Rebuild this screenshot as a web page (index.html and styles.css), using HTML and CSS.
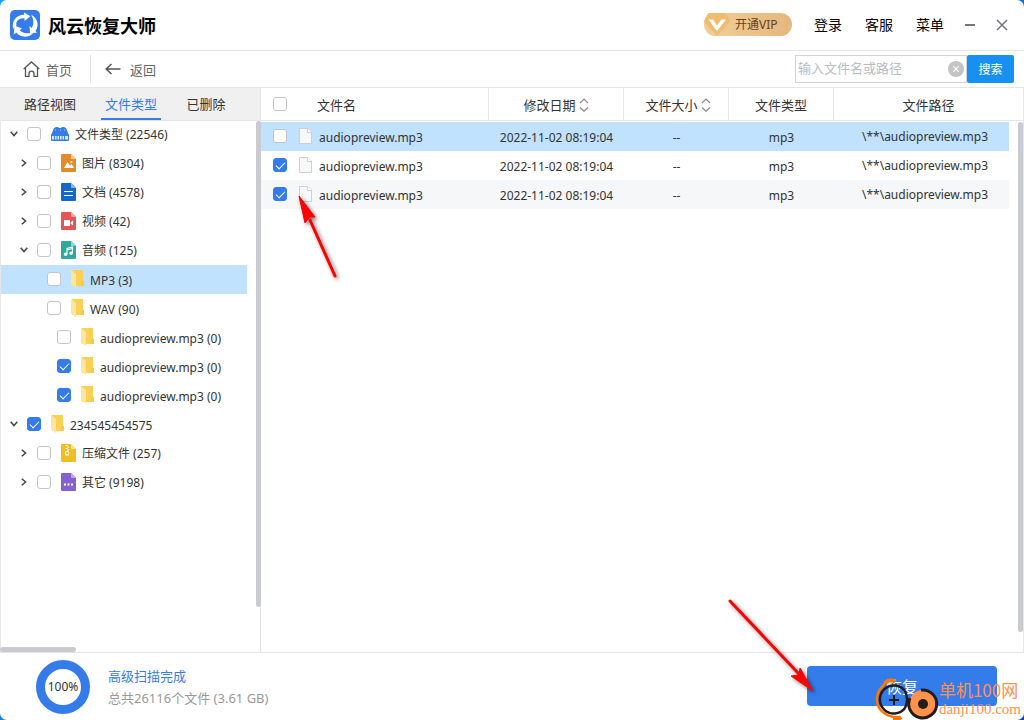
FILE: index.html
```html
<!DOCTYPE html>
<html lang="zh-CN">
<head>
<meta charset="utf-8">
<meta name="viewport" content="width=device-width, initial-scale=1">
<title>风云恢复大师</title>
<link rel="stylesheet" href="styles.css">
</head>
<body>
<svg class="defs" aria-hidden="true">
  <symbol id="folder" viewBox="0 0 13 18"><path d="M1 0H12V11H13V16H1Z" fill="#fad056"/><path d="M10 11H13V16H10Z" fill="#f7c948"/><path d="M0 0L5 4V18L0 14.500Z" fill="#ffe6a0"/></symbol>
  <symbol id="open" viewBox="0 0 8 8"><path d="M.7 1.800L4 5.500L7.300 1.800" fill="none" stroke="#444" stroke-width="1.500"/></symbol>
  <symbol id="closed" viewBox="0 0 8 8"><path d="M1.800.7L5.600 4L1.800 7.300" fill="none" stroke="#444" stroke-width="1.500"/></symbol>
  <symbol id="file" viewBox="0 0 13 16"><path d="M.5.5H9L12.500 4V15.500H.5Z" fill="#f7f8fa" stroke="#cfcfcf"/><path d="M8.500.5V4.500H12.500" fill="#fff" stroke="#cfcfcf"/></symbol>
  <symbol id="sort" viewBox="0 0 10 14"><path d="M1 5L5 1L9 5M1 9.500L5 13.300L9 9.500" fill="none" stroke="#8b8b8b" stroke-width="1.200"/></symbol>
</svg>
<div class="window">
  <header class="titlebar">
    <svg class="logo" viewBox="0 0 30 30" aria-hidden="true"><rect width="30" height="30" rx="5" fill="#357ceb"/><g fill="#fff"><path d="M3.200 19C1.500 11 6 5 14 4.800V2.500L20.500 6.300L14.500 11V8.200C9 7.800 5.500 11 6.500 15Z"/><path d="M21 4.500C27.500 8 29.500 15 25.500 21L27 22.800L20 23L19.500 16L21.800 18C24.300 13.500 23.800 9 21 4.500Z"/><path d="M4.500 15.500L12 18.500L9.800 20.200C13 23.600 18.500 24.200 24 22.200C19 28.500 10 27.800 6.300 22.600L3.800 24.500Z"/></g></svg>
    <h1 class="app-name">风云恢复大师</h1>
    <button class="vip"><svg class="vip-gem" viewBox="0 0 26 23" aria-hidden="true"><path d="M6 0H20Q22 0 23 2L26 7Q26.500 8.500 25 10L14 22Q13 23 12 22L1 10Q-.5 8.500 .5 7L3 2Q4 0 6 0Z" fill="#efbd70"/><path d="M4.500 6.500H9L13 12.500L17.500 6.500H22L13.500 17.500H12.500Z" fill="#fff"/></svg>开通VIP</button>
    <nav class="menu"><a href="#">登录</a><a href="#">客服</a><a href="#">菜单</a></nav>
    <button class="win-btn" aria-label="最小化"><svg viewBox="0 0 12 12"><path d="M1 6H11" stroke="#74767c" stroke-width="2"/></svg></button>
    <button class="win-btn" aria-label="关闭"><svg viewBox="0 0 12 12"><path d="M1 1L11 11M11 1L1 11" stroke="#74767c" stroke-width="1.500"/></svg></button>
  </header>
  <div class="toolbar">
    <button class="tool home"><svg width="17" height="17" viewBox="0 0 17 17" aria-hidden="true"><path d="M.7 8L8.500.9L16.300 8M2.500 7V15.300H6V12.500Q6 10.200 8.500 10.200T11 12.500V15.300H14.500V7" fill="none" stroke="#555" stroke-width="1.300"/></svg>首页</button>
    <button class="tool back"><svg width="16" height="12" viewBox="0 0 16 12" aria-hidden="true"><path d="M15.500 6H1.500M6.500 1L1.200 6L6.500 11" fill="none" stroke="#555" stroke-width="1.500"/></svg>返回</button>
    <form class="search">
      <input class="search-input" type="text" placeholder="输入文件名或路径" aria-label="输入文件名或路径">
      <button class="clear" type="reset" aria-label="清除"><svg viewBox="0 0 16 16"><circle cx="8" cy="8" r="8" fill="#c4c4c4"/><path d="M5.200 5.200L10.800 10.800M10.800 5.200L5.200 10.800" stroke="#fff" stroke-width="1.100"/></svg></button>
      <button class="search-btn" type="button">搜索</button>
    </form>
  </div>
  <main class="main">
    <aside class="sidebar">
      <div class="tabs"><button class="tab">路径视图</button><button class="tab active">文件类型</button><button class="tab">已删除</button></div>
      <div class="tree">
        <div class="node l0"><svg class="arrow"><use href="#open"/></svg><label><input type="checkbox"><svg width="18" height="14" viewBox="0 0 18 14" aria-hidden="true"><path d="M3 1L5 0H7L8 1H10L11 0H13L15 1L18 8V13Q18 14 17 14H1Q0 14 0 13V8Z" fill="#357ceb"/><path d="M1 9H17V12.500H1Z" fill="#e5efff"/><path d="M3.500 8V13M6 8V13M8.500 8V13M11 8V13M13.500 8V13" stroke="#357ceb"/><path d="M4 3H5M9 3H10M13 3H14" stroke="#b5d0ff"/></svg><span>文件类型 (22546)</span></label></div>
        <div class="node l1"><svg class="arrow"><use href="#closed"/></svg><label><input type="checkbox"><svg width="15" height="18" viewBox="0 0 15 18" aria-hidden="true"><path d="M1 0H10L15 5V17Q15 18 14 18H1Q0 18 0 17V1Q0 0 1 0Z" fill="#e48a28"/><path d="M10 0L15 5H10Z" fill="#f7c98f"/><path d="M3 14L6.500 8L9 11.500L10.500 10L13 14Z" fill="#fff"/><circle cx="10.500" cy="8" r="1" fill="#fff"/></svg><span>图片 (8304)</span></label></div>
        <div class="node l1"><svg class="arrow"><use href="#closed"/></svg><label><input type="checkbox"><svg width="15" height="18" viewBox="0 0 15 18" aria-hidden="true"><path d="M1 0H10L15 5V17Q15 18 14 18H1Q0 18 0 17V1Q0 0 1 0Z" fill="#1369c7"/><path d="M10 0L15 5H10Z" fill="#80b6f2"/><path d="M3 8.500H12M3 12.500H12" stroke="#fff" stroke-width="1.200"/></svg><span>文档 (4578)</span></label></div>
        <div class="node l1"><svg class="arrow"><use href="#closed"/></svg><label><input type="checkbox"><svg width="15" height="18" viewBox="0 0 15 18" aria-hidden="true"><path d="M1 0H10L15 5V17Q15 18 14 18H1Q0 18 0 17V1Q0 0 1 0Z" fill="#e65458"/><path d="M10 0L15 5H10Z" fill="#f7a5a7"/><path d="M3 8H9V14H3ZM9.500 10.500L12 8.500V13.500L9.500 11.500Z" fill="#fff"/></svg><span>视频 (42)</span></label></div>
        <div class="node l1"><svg class="arrow"><use href="#open"/></svg><label><input type="checkbox"><svg width="15" height="18" viewBox="0 0 15 18" aria-hidden="true"><path d="M1 0H10L15 5V17Q15 18 14 18H1Q0 18 0 17V1Q0 0 1 0Z" fill="#30a79f"/><path d="M10 0L15 5H10Z" fill="#70e2cd"/><path d="M6 13V7.500L11.500 6V12M6 9L11.500 7.500" fill="none" stroke="#fff" stroke-width="1.100"/><circle cx="4.600" cy="13.300" r="1.700" fill="#fff"/><circle cx="10.100" cy="12.300" r="1.700" fill="#fff"/></svg><span>音频 (125)</span></label></div>
        <div class="node l2 selected"><label><input type="checkbox"><svg class="folder"><use href="#folder"/></svg><span>MP3 (3)</span></label></div>
        <div class="node l2"><label><input type="checkbox"><svg class="folder"><use href="#folder"/></svg><span>WAV (90)</span></label></div>
        <div class="node l3"><label><input type="checkbox"><svg class="folder"><use href="#folder"/></svg><span>audiopreview.mp3 (0)</span></label></div>
        <div class="node l3"><label><input type="checkbox" checked><svg class="folder"><use href="#folder"/></svg><span>audiopreview.mp3 (0)</span></label></div>
        <div class="node l3"><label><input type="checkbox" checked><svg class="folder"><use href="#folder"/></svg><span>audiopreview.mp3 (0)</span></label></div>
        <div class="node l0"><svg class="arrow"><use href="#open"/></svg><label><input type="checkbox" checked><svg class="folder"><use href="#folder"/></svg><span>234545454575</span></label></div>
        <div class="node l1"><svg class="arrow"><use href="#closed"/></svg><label><input type="checkbox"><svg width="15" height="18" viewBox="0 0 15 18" aria-hidden="true"><path d="M1 0H10L15 5V17Q15 18 14 18H1Q0 18 0 17V1Q0 0 1 0Z" fill="#f3bd20"/><path d="M10 0L15 5H10Z" fill="#fbe39b"/><path d="M4.500 1.500H6.500M6 3H8M4.500 4.500H6.500M6 6H8" stroke="#fff"/><path d="M4.700 7.500H7.700V11H4.700Z" fill="none" stroke="#fff"/></svg><span>压缩文件 (257)</span></label></div>
        <div class="node l1"><svg class="arrow"><use href="#closed"/></svg><label><input type="checkbox"><svg width="15" height="18" viewBox="0 0 15 18" aria-hidden="true"><path d="M1 0H10L15 5V17Q15 18 14 18H1Q0 18 0 17V1Q0 0 1 0Z" fill="#8560d0"/><path d="M10 0L15 5H10Z" fill="#bfa0f5"/><path d="M3 10.500H5V12.500H3ZM6.500 10.500H8.500V12.500H6.500ZM10 10.500H12V12.500H10Z" fill="#fff"/></svg><span>其它 (9198)</span></label></div>
      </div>
      <div class="bar side-bar"></div>
      <div class="bar bottom-bar"></div>
    </aside>
    <section class="files">
      <table class="list">
        <colgroup><col class="c-check"><col class="c-name"><col class="c-date"><col class="c-size"><col class="c-type"><col><col class="c-end"></colgroup>
        <thead><tr><th class="check"><input type="checkbox" aria-label="全选"></th><th class="name-head">文件名</th><th>修改日期<svg class="sort"><use href="#sort"/></svg></th><th class="size-head">文件大小<svg class="sort"><use href="#sort"/></svg></th><th>文件类型</th><th colspan="2">文件路径</th></tr></thead>
        <tbody>
          <tr class="selected"><td class="check"><input type="checkbox" id="f1"></td><td><label class="fname" for="f1"><svg class="file"><use href="#file"/></svg><span>audiopreview.mp3</span></label></td><td>2022-11-02 08:19:04</td><td>--</td><td>mp3</td><td class="path">\**\audiopreview.mp3</td><td class="end"></td></tr>
          <tr><td class="check"><input type="checkbox" id="f2" checked></td><td><label class="fname" for="f2"><svg class="file"><use href="#file"/></svg><span>audiopreview.mp3</span></label></td><td>2022-11-02 08:19:04</td><td>--</td><td>mp3</td><td class="path">\**\audiopreview.mp3</td><td class="end"></td></tr>
          <tr class="alt"><td class="check"><input type="checkbox" id="f3" checked></td><td><label class="fname" for="f3"><svg class="file"><use href="#file"/></svg><span>audiopreview.mp3</span></label></td><td>2022-11-02 08:19:04</td><td>--</td><td>mp3</td><td class="path">\**\audiopreview.mp3</td><td class="end"></td></tr>
        </tbody>
      </table>
      <div class="bar list-bar"></div>
    </section>
  </main>
  <footer class="footer">
    <div class="ring">100%</div>
    <div class="status"><p class="done">高级扫描完成</p><p class="total">总共26116个文件 (3.61 GB)</p></div>
    <button class="recover">恢复</button>
  </footer>
  <svg class="pointer first" width="60" height="100" viewBox="0 0 60 100" aria-hidden="true"><path d="M44 85L19 29" stroke="#f00" stroke-width="3" stroke-linecap="round"/><path d="M8 5L24 26L18.500 26L14 32Z" fill="#f00" stroke="#f00"/></svg>
  <svg class="pointer second" width="100" height="110" viewBox="0 0 100 110" aria-hidden="true"><path d="M10 11L79 84" stroke="#f00" stroke-width="3" stroke-linecap="round"/><path d="M93 101L71 86L79 85L80 78Z" fill="#f00" stroke="#f00"/></svg>
  <div class="watermark">
    <svg width="66" height="46" viewBox="0 0 66 46" aria-hidden="true"><g fill="none"><path d="M22 6C17 2 12 6 9 11C2 18 2 31 11 37Q18 42 27 41" stroke="#f70" stroke-width="2.500"/><path d="M12 7Q17 2 22 6" stroke="#f70" stroke-width="4"/><path d="M20 43Q25 44 28 41" stroke="#f70" stroke-width="4"/><path d="M32 15A14 14 0 1 0 32 32M32 15Q36 24 32 32" stroke="#241c1b" stroke-width="2.500"/><path d="M16 24H26M21 19V29" stroke="#241c1b" stroke-width="2"/><circle cx="50" cy="28" r="14" fill="#ff924b"/><path d="M48 14A14 14 0 1 1 37 22" stroke="#241c1b" stroke-width="3"/></g><circle cx="50" cy="28" r="5" fill="#241c1b"/></svg>
    <div><div class="wm-cn">单机100网</div><div class="wm-en">danji100.com</div></div>
  </div>
</div>
</body>
</html>
```
FILE: styles.css
```css
* { box-sizing: border-box; }
body { margin: 0; background: linear-gradient(135deg, #18a5ee, #0b45ad); font: 12px "Noto Sans", "Noto Sans CJK SC", sans-serif; color: #333; }
button { border: 0; padding: 0; background: none; font: inherit; color: inherit; }
svg { flex: none; display: block; }
p { margin: 0; }
.defs { position: absolute; width: 0; height: 0; }
.window { position: relative; display: flex; flex-direction: column; height: 100vh; background: #fff; border-radius: 7px; overflow: hidden; }

.titlebar { display: flex; align-items: center; height: 51px; padding: 0 16px 2px 10px; border-bottom: 1px solid #e6e6e6; }
.logo { width: 30px; height: 30px; margin-top: 2px; }
.app-name { margin: 2px auto 0 8px; font: bold 18px "Noto Sans CJK SC", sans-serif; color: #000; }
.vip { display: flex; align-items: center; width: 88px; height: 23px; gap: 5px; margin-right: 22px; border-radius: 12px; background: linear-gradient(90deg, #f1cf9a, #e4b77c); color: #68401b; font-size: 12px; }
.vip-gem { width: 26px; height: 23px; }
.menu { display: flex; gap: 23px; margin-right: 20px; font-size: 14px; }
.menu a { color: #000; text-decoration: none; }
.win-btn { width: 12px; height: 12px; margin-top: 2px; }
.win-btn + .win-btn { margin-left: 20px; }

.toolbar { display: flex; align-items: center; height: 37px; padding: 0 10px 0 23px; border-bottom: 1px solid #e6e6e6; font-size: 13px; color: #666; }
.tool { display: flex; align-items: center; height: 28px; }
.home { gap: 6px; padding-right: 18px; border-right: 1px solid #e0e0e0; }
.back { gap: 9px; padding-left: 14px; }
.search { display: flex; align-items: center; margin-left: auto; }
.search-input { width: 172px; height: 28px; padding: 0 26px 2px 2px; border: 1px solid #d4d4d4; font: inherit; outline: 0; }
.search-input::placeholder { color: #b8bcc4; }
.clear { width: 16px; height: 16px; margin: 0 3px 0 -19px; }
.search-btn { width: 47px; height: 28px; border-radius: 2px; background: #1890f2; color: #fff; font-size: 12px; }

.main { display: flex; flex: 1; min-height: 0; }
.sidebar { position: relative; flex: none; width: 261px; border-right: 1px solid #e6e6e6; }
.tabs { display: flex; height: 33px; padding-left: 20px; gap: 21px; background: #f0f0f0; border-bottom: 1px solid #e6e6e6; font-size: 13px; }
.tab { width: 60px; height: 32px; border-bottom: 2px solid transparent; }
.tab.active { color: #357ceb; border-color: #357ceb; }
.tab:last-child { width: 48px; }
.tree { border-left: 1px solid #e6e6e6; height: calc(100% - 33px); }
.node { display: flex; align-items: center; height: 29px; margin-right: 13px; padding-bottom: 2px; }
.node:first-child { height: 28px; }
.node label { display: flex; align-items: center; gap: 6px; }
.arrow { width: 8px; height: 8px; }
.l0 { padding-left: 9px; }
.l0 label { margin-left: 9px; }
.l1 { padding-left: 19px; }
.l1 label { margin-left: 9px; }
.l2 { padding-left: 46px; }
.l3 { padding-left: 56px; }
.selected { background: #c0e2ff; }
.folder { width: 13px; height: 18px; }
.folder + span { padding-top: 4px; }

input[type="checkbox"] { appearance: none; flex: none; display: block; width: 14px; height: 14px; margin: 0; border: 1px solid #c4c4c4; border-radius: 3px; background: #fff; }
input[type="checkbox"]:checked { border-color: #357ceb; background: #357ceb; }
input[type="checkbox"]:checked::after { content: ""; display: block; width: 8px; height: 4px; margin: 3px 2px; border: solid #fff; border-width: 0 0 1px 1px; transform: rotate(-45deg); }
.node input[type="checkbox"] { margin-right: 4px; }

.files { position: relative; flex: 1; border-right: 1px solid #e6e6e6; }
.list { width: 100%; table-layout: fixed; border-collapse: separate; border-spacing: 0; }
.c-check { width: 38px; }
.c-name { width: 190px; }
.c-date { width: 135px; }
.c-size, .c-type { width: 105px; }
.c-end { width: 14px; }
th { height: 33px; padding: 0; border: solid #e6e6e6; border-width: 0 1px 1px 0; font-size: 13px; font-weight: normal; }
th:last-child { border-right: 0; }
th.check { border-right: 0; }
th.name-head { padding-left: 18px; text-align: left; }
th.size-head { padding-left: 4px; }
td { height: 29px; padding: 2px 0 0; text-align: center; }
th.check { padding-left: 12px; }
td.check { padding: 0 0 2px 12px; }
.sort { display: inline-block; width: 10px; height: 14px; margin-left: 3px; vertical-align: -2px; }
.fname { display: flex; align-items: center; gap: 7px; }
.file { width: 13px; height: 16px; margin-bottom: 4px; }
td.path { padding: 0 0 0 7px; }
tr.selected { background: none; }
.selected td { background: #c0e2ff; }
.alt td { background: #f5f7f9; }
tr td.end { background: none; }
tbody::before { content: ""; display: block; height: 1px; }

.bar { position: absolute; border-radius: 3px; background: #c8cbd0; }
.side-bar { top: 33px; right: -1px; bottom: 45px; width: 5px; }
.bottom-bar { left: 0; bottom: 0; width: 76px; height: 5px; }
.list-bar { top: 34px; right: 0; bottom: 20px; width: 5px; }

.footer { display: flex; align-items: center; height: 68px; padding: 0 27px 0 36px; border-top: 1px solid #e6e6e6; }
.ring { display: grid; place-items: center; width: 54px; height: 54px; border: 9px solid #357ceb; border-radius: 50%; font-size: 12px; }
.status { margin-left: 18px; font-size: 13px; line-height: 22px; }
.done { color: #357ceb; }
.total { color: #999; }
.recover { width: 190px; height: 40px; margin: 0 0 2px auto; border-radius: 4px; background: #357ceb; color: #fff; font-size: 16px; }

.pointer { position: absolute; filter: drop-shadow(2px 2px 2px #0008); pointer-events: none; }
.first { left: 291px; top: 191px; }
.second { left: 720px; top: 590px; }
.watermark { position: absolute; right: 3px; bottom: -2px; display: flex; align-items: center; color: #ff914f; pointer-events: none; }
.wm-cn { font: 17px/20px "Noto Sans CJK SC", sans-serif; }
.wm-en { font: 15px/18px "Liberation Serif", serif; }
```
